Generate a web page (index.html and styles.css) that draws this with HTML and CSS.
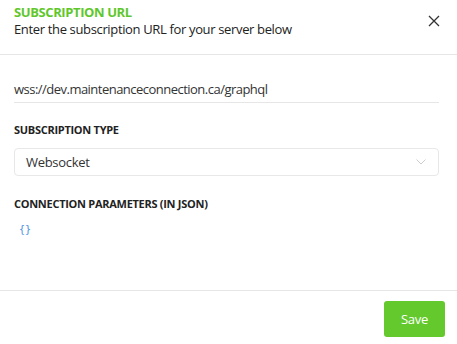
FILE: index.html
```html
<!DOCTYPE html>
<html>
<head>
<meta charset="utf-8">
<link rel="stylesheet" href="styles.css">
</head>
<body>
<div class="modal">
  <header class="head">
    <div class="titles">
      <div class="title">SUBSCRIPTION URL</div>
      <div class="subtitle">Enter the subscription URL for your server below</div>
    </div>
    <button class="close" aria-label="Close">
      <svg width="12" height="12" viewBox="0 0 12 12"><path d="M1 1L11 11M11 1L1 11" stroke="#333" stroke-width="1.3" fill="none"/></svg>
    </button>
  </header>
  <main class="body">
    <div class="url">wss://dev.maintenanceconnection.ca/graphql</div>
    <div class="label">SUBSCRIPTION TYPE</div>
    <div class="select">
      <span>Websocket</span>
      <svg width="10" height="6" viewBox="0 0 10 6"><path d="M0.5 0.5L5 5L9.5 0.5" stroke="#ccc" stroke-width="1" fill="none"/></svg>
    </div>
    <div class="label label2">CONNECTION PARAMETERS (IN JSON)</div>
    <div class="json">{}</div>
  </main>
  <footer class="foot">
    <button class="save">Save</button>
  </footer>
</div>
</body>
</html>
```
FILE: styles.css
```css
* { box-sizing: border-box; }
html, body { margin: 0; padding: 0; background: #fff; }
body { font-family: "Open Sans", "Noto Sans", sans-serif; color: #222; width: 457px; height: 344px; overflow: hidden; }
.modal { display: flex; flex-direction: column; height: 344px; }
.head { display: flex; justify-content: space-between; align-items: flex-start; padding: 4px 14px 0 14px; height: 55px; border-bottom: 1px solid #e6e6e6; }
.title { color: #5fc72b; font-weight: 700; font-size: 13px; line-height: 17px; letter-spacing: -0.4px; }
.subtitle { font-size: 13px; line-height: 17px; color: #222; letter-spacing: -0.35px; }
.close { border: 0; background: none; padding: 0; margin: 10px 2px 0 0; width: 14px; height: 14px; display: flex; align-items: center; justify-content: center; }
.body { flex: 1; padding: 25px 18px 0 14px; }
.url { font-size: 13px; line-height: 18px; color: #333; padding-bottom: 4px; border-bottom: 1px solid #e6e6e6; letter-spacing: -0.52px; }
.label { font-size: 11px; font-weight: 700; color: #222; margin-top: 20px; line-height: 14px; letter-spacing: -0.28px; }
.select { margin-top: 11px; height: 28px; border: 1px solid #e8e8e8; border-radius: 4px; display: flex; align-items: center; justify-content: space-between; padding: 0 12px 0 11px; font-size: 13px; color: #333; letter-spacing: -0.3px; }
.label2 { margin-top: 21px; }
.json { margin-top: 13px; margin-left: 5px; font-family: "DejaVu Sans Mono", monospace; font-size: 10px; color: #4a90e2; }
.foot { height: 54px; border-top: 1px solid #e6e6e6; display: flex; justify-content: flex-end; align-items: flex-start; padding: 10px 12px 0 0; }
.save { background: #63c92c; color: #fff; border: 0; border-radius: 3px; width: 61px; height: 36px; font-family: inherit; font-size: 13px; letter-spacing: -0.3px; }
```
